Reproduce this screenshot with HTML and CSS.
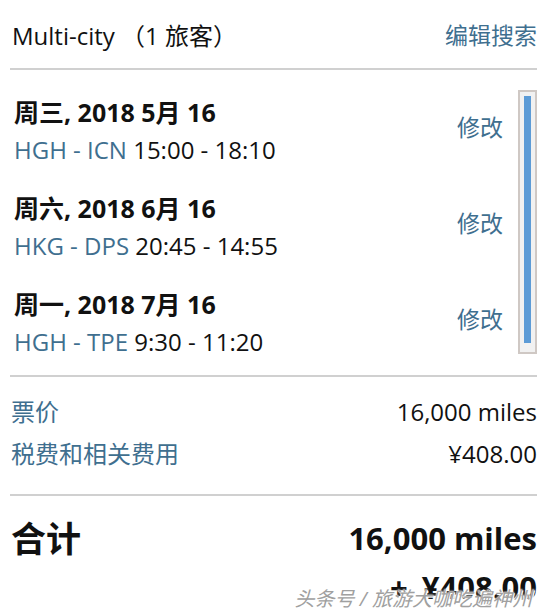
FILE: index.html
```html
<!DOCTYPE html>
<html lang="zh-CN">
<head>
  <meta charset="UTF-8" />
  <meta name="viewport" content="width=device-width, initial-scale=1" />
  <title>Multi-city 行程</title>
  <link rel="stylesheet" href="styles.css">
</head>
<body>
  <div class="page">
    <div class="header">
      <span class="trip">Multi-city （1 旅客）</span>
      <a class="link edit">编辑搜索</a>
    </div>

    <div class="legs">
      <div class="leg-list">
        <div class="leg">
          <div class="leg-info">
            <div class="date">周三, 2018 5月 16</div>
            <div class="route"><span class="link">HGH - ICN</span> 15:00 - 18:10</div>
          </div>
          <a class="link change">修改</a>
        </div>
        <div class="leg">
          <div class="leg-info">
            <div class="date">周六, 2018 6月 16</div>
            <div class="route"><span class="link">HKG - DPS</span> 20:45 - 14:55</div>
          </div>
          <a class="link change">修改</a>
        </div>
        <div class="leg">
          <div class="leg-info">
            <div class="date">周一, 2018 7月 16</div>
            <div class="route"><span class="link">HGH - TPE</span> 9:30 - 11:20</div>
          </div>
          <a class="link change">修改</a>
        </div>
      </div>
      <div class="scroll-track"><div class="scroll-thumb"></div></div>
    </div>

    <div class="fares">
      <div class="fare-row">
        <span class="link">票价</span>
        <span>16,000 miles</span>
      </div>
      <div class="fare-row">
        <span class="link">税费和相关费用</span>
        <span>¥408.00</span>
      </div>
    </div>

    <div class="total">
      <div class="total-label">合计</div>
      <div class="total-amount">
        <div>16,000 miles</div>
        <div class="plus">+ ¥408.00</div>
      </div>
    </div>
  </div>

  <div class="watermark">头条号 / 旅游大咖吃遍神州</div>
</body>
</html>
```

FILE: styles.css
```css
body {
  margin: 0;
  background: #fff;
  font-family: 'Open Sans', 'Noto Sans CJK SC', sans-serif;
  color: #111;
  overflow: hidden;
}

.page {
  padding: 0 7px 0 10px;
}

.link {
  color: #3f6f8f;
}

.header {
  display: flex;
  justify-content: space-between;
  align-items: center;
  height: 68px;
  padding-left: 2px;
  border-bottom: 2px solid #d0d0d0;
}

.trip {
  font-size: 24px;
}

.edit {
  font-size: 23px;
}

.legs {
  display: flex;
  padding: 20px 0 14px 0;
  border-bottom: 2px solid #d0d0d0;
}

.leg-list {
  flex: 1;
  display: flex;
  flex-direction: column;
  gap: 20px;
  padding: 3px 15px 0 4px;
}

.leg {
  display: flex;
  justify-content: space-between;
  align-items: center;
}

.date {
  font-size: 25px;
  font-weight: 700;
  line-height: 38px;
}

.route {
  font-size: 24px;
  line-height: 38px;
}

.change {
  font-size: 23px;
  margin-top: -10px;
}

.scroll-track {
  width: 19px;
  height: 264px;
  box-sizing: border-box;
  border: 2px solid #cfc8c4;
  background: #f1f1f1;
  padding: 4px 4px 9px 4px;
}

.scroll-thumb {
  height: 100%;
  background: #5c9bd6;
}

.fares {
  padding: 14px 0 19px 1px;
  border-bottom: 2px solid #d0d0d0;
}

.fare-row {
  display: flex;
  justify-content: space-between;
  font-size: 24px;
  line-height: 42px;
}

.total {
  display: flex;
  justify-content: space-between;
  align-items: flex-start;
  padding: 18px 0 0 1px;
}

.total-label {
  font-size: 35px;
  font-weight: 700;
  line-height: 50px;
}

.total-amount {
  text-align: right;
  font-size: 31px;
  font-weight: 700;
  line-height: 49px;
}

.plus {
  word-spacing: 6px;
}

.watermark {
  position: absolute;
  right: 12px;
  top: 583px;
  font-size: 20px;
  color: #a0a0a0;
  font-style: italic;
  text-shadow: 0 0 2px #fff, 0 0 2px #fff, 1px 1px 0 #fff;
}
```
